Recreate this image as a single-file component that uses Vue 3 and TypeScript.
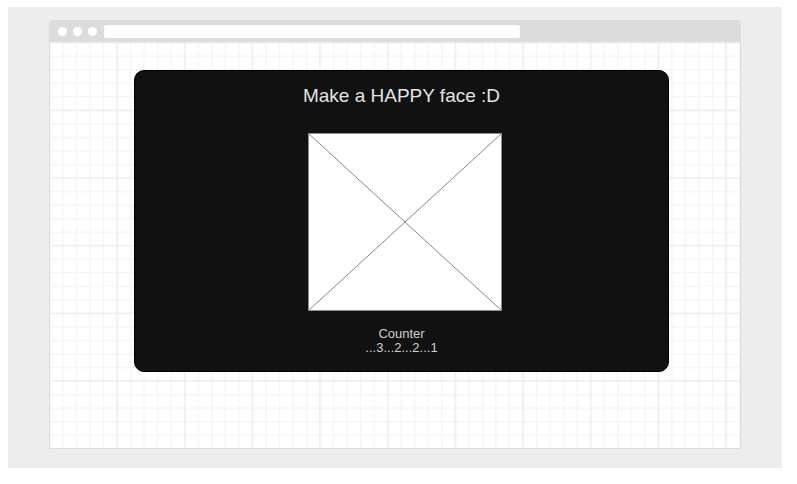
<script setup lang="ts">
const title: string = 'Make a HAPPY face :D'
const countdown: string = '...3...2...2...1'
const dots: number[] = [1, 2, 3]
</script>

<template>
  <main class="canvas">
    <section class="window">
      <header class="toolbar">
        <span v-for="dot in dots" :key="dot" class="dot"></span>
        <input class="address" type="text" aria-label="Address" />
      </header>
      <div class="viewport">
        <svg class="grid" viewBox="2 0 1020 600" preserveAspectRatio="xMinYMin slice" aria-hidden="true">
          <defs>
            <pattern id="minor" width="20" height="20" patternUnits="userSpaceOnUse">
              <path d="M0 1H20M1 0V20" fill="none" stroke="#f5f5f5" stroke-width="2" />
            </pattern>
            <pattern id="major" width="100" height="100" patternUnits="userSpaceOnUse">
              <path d="M0 1H100M1 0V100" fill="none" stroke="#eeeeee" stroke-width="2" />
            </pattern>
          </defs>
          <rect width="2000" height="2000" fill="url(#minor)" />
          <rect width="2000" height="2000" fill="url(#major)" />
        </svg>
        <article class="card">
          <h1 class="title">{{ title }}</h1>
          <div class="frame">
            <svg class="placeholder" viewBox="0 0 194 178" preserveAspectRatio="none" role="img" aria-label="Camera preview">
              <rect x="0.5" y="0.5" width="193" height="177" fill="#fff" stroke="#8c8c8c" />
              <path d="M0.5 0.5L193.5 177.5M193.5 0.5L0.5 177.5" fill="none" stroke="#888" />
            </svg>
          </div>
          <p class="counter">Counter<br />{{ countdown }}</p>
        </article>
      </div>
    </section>
  </main>
</template>

<style>
body {
  margin: 0;
  background: #fff;
}
</style>

<style scoped>
.canvas {
  margin: 7px 15px 16px 8px;
  padding: 13px 41px 19px;
  background: #ededed;
  font-family: "Liberation Sans", Arial, sans-serif;
}

.window {
  box-sizing: border-box;
  border: 1px solid #dcdcdc;
  border-radius: 3px 3px 0 0;
  overflow: hidden;
  background: #fff;
}

.toolbar {
  display: flex;
  align-items: center;
  gap: 6px;
  height: 21px;
  padding-left: 8px;
  background: #dcdcdc;
}

.dot {
  width: 9px;
  height: 9px;
  border-radius: 50%;
  background: #fff;
}

.address {
  box-sizing: border-box;
  width: 61%;
  height: 13px;
  margin: 0 0 0 1px;
  padding: 0 4px;
  border: 0;
  border-radius: 2px;
  background: #fff;
  font: 9px "Liberation Sans", Arial, sans-serif;
  outline: none;
}

.viewport {
  position: relative;
  padding: 28px 71px 76px 84px;
}

.grid {
  position: absolute;
  inset: 0;
  width: 100%;
  height: 100%;
}

.card {
  position: relative;
  box-sizing: border-box;
  padding: 14px 0 16px;
  border: 1px solid #000;
  border-radius: 10px;
  background: #111;
  color: #e4e4e4;
  text-align: center;
}

.title {
  margin: 0 0 26px;
  font-size: 19px;
  font-weight: 400;
  line-height: 22px;
}

.frame {
  padding: 0 166px 0 173px;
}

.placeholder {
  display: block;
  width: 100%;
  height: 178px;
}

.counter {
  margin: 16px 0 0;
  color: #d0d0d0;
  font-size: 13px;
  line-height: 14px;
}
</style>
